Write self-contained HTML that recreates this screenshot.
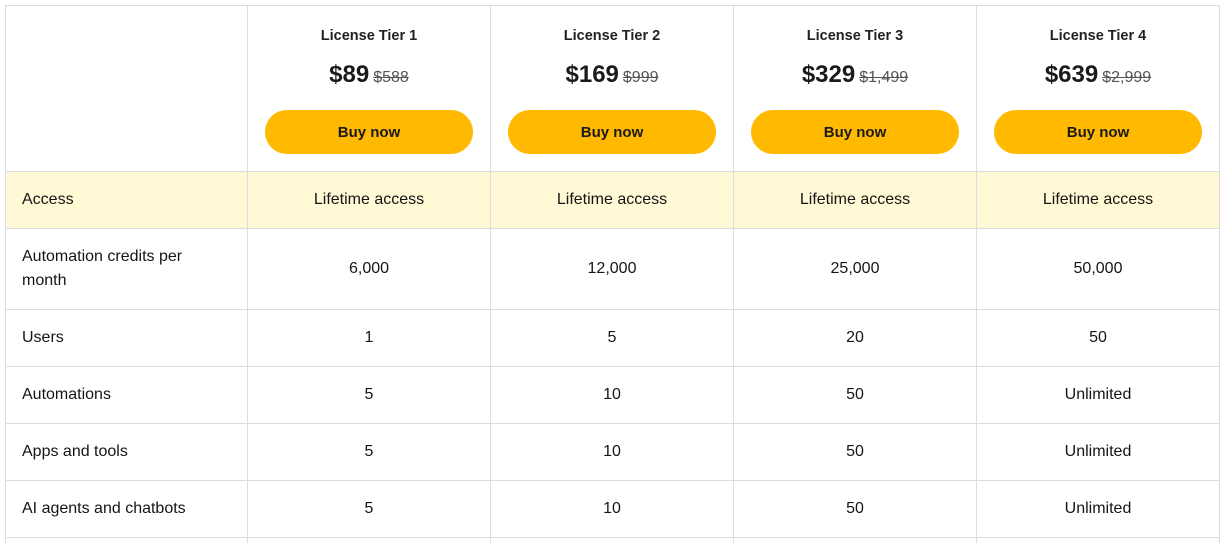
<!DOCTYPE html>
<html><head><meta charset="utf-8"><style>
*{margin:0;padding:0;box-sizing:border-box}
body{width:1228px;height:543px;background:#fff;font-family:"Liberation Sans",sans-serif;color:#1a1a1a;position:relative;overflow:hidden}
.v{position:absolute;top:5px;bottom:0;width:1px;background:#dcdce6}
.h{position:absolute;left:5px;width:1215px;height:1px;background:#dcdce6}
.hl{position:absolute;left:6px;width:1213px;top:172px;height:56px;background:#fff9d6}
.c{position:absolute;width:242px;text-align:center;font-size:16px;color:#151515}
.l{position:absolute;left:22px;font-size:16px;line-height:24px;color:#151515}
.t{font-size:14.5px;font-weight:bold;color:#222}
.p{font-size:24px;font-weight:bold;color:#1a1a1a}
.p s{font-size:16px;font-weight:normal;color:#555;margin-left:4px}
.b{position:absolute;width:208px;height:44px;border-radius:22px;background:#ffb900;font-weight:bold;font-size:15px;line-height:46px;text-align:center;color:#1a1a1a}
</style></head><body>
<div class="hl"></div>
<div class="h" style="top:5px"></div>
<div class="h" style="top:171px"></div>
<div class="h" style="top:228px"></div>
<div class="h" style="top:309px"></div>
<div class="h" style="top:366px"></div>
<div class="h" style="top:423px"></div>
<div class="h" style="top:480px"></div>
<div class="h" style="top:537px"></div>
<div class="v" style="left:5px"></div>
<div class="v" style="left:247px"></div>
<div class="v" style="left:490px"></div>
<div class="v" style="left:733px"></div>
<div class="v" style="left:976px"></div>
<div class="v" style="left:1219px"></div>

<div class="c t" style="left:248px;top:28px">License Tier 1</div>
<div class="c t" style="left:491px;top:28px">License Tier 2</div>
<div class="c t" style="left:734px;top:28px">License Tier 3</div>
<div class="c t" style="left:977px;top:28px">License Tier 4</div>
<div class="c p" style="left:248px;top:61px">$89<s>$588</s></div>
<div class="c p" style="left:491px;top:61px">$169<s>$999</s></div>
<div class="c p" style="left:734px;top:61px">$329<s>$1,499</s></div>
<div class="c p" style="left:977px;top:61px">$639<s>$2,999</s></div>
<div class="b" style="left:265px;top:110px">Buy now</div>
<div class="b" style="left:508px;top:110px">Buy now</div>
<div class="b" style="left:751px;top:110px">Buy now</div>
<div class="b" style="left:994px;top:110px">Buy now</div>

<div class="l" style="top:188px">Access</div>
<div class="c" style="left:248px;top:191px">Lifetime access</div>
<div class="c" style="left:491px;top:191px">Lifetime access</div>
<div class="c" style="left:734px;top:191px">Lifetime access</div>
<div class="c" style="left:977px;top:191px">Lifetime access</div>

<div class="l" style="top:245px">Automation credits per<br>month</div>
<div class="c" style="left:248px;top:260px">6,000</div>
<div class="c" style="left:491px;top:260px">12,000</div>
<div class="c" style="left:734px;top:260px">25,000</div>
<div class="c" style="left:977px;top:260px">50,000</div>

<div class="l" style="top:326px">Users</div>
<div class="c" style="left:248px;top:329px">1</div>
<div class="c" style="left:491px;top:329px">5</div>
<div class="c" style="left:734px;top:329px">20</div>
<div class="c" style="left:977px;top:329px">50</div>

<div class="l" style="top:383px">Automations</div>
<div class="c" style="left:248px;top:386px">5</div>
<div class="c" style="left:491px;top:386px">10</div>
<div class="c" style="left:734px;top:386px">50</div>
<div class="c" style="left:977px;top:386px">Unlimited</div>

<div class="l" style="top:440px">Apps and tools</div>
<div class="c" style="left:248px;top:443px">5</div>
<div class="c" style="left:491px;top:443px">10</div>
<div class="c" style="left:734px;top:443px">50</div>
<div class="c" style="left:977px;top:443px">Unlimited</div>

<div class="l" style="top:497px">AI agents and chatbots</div>
<div class="c" style="left:248px;top:500px">5</div>
<div class="c" style="left:491px;top:500px">10</div>
<div class="c" style="left:734px;top:500px">50</div>
<div class="c" style="left:977px;top:500px">Unlimited</div>
</body></html>
